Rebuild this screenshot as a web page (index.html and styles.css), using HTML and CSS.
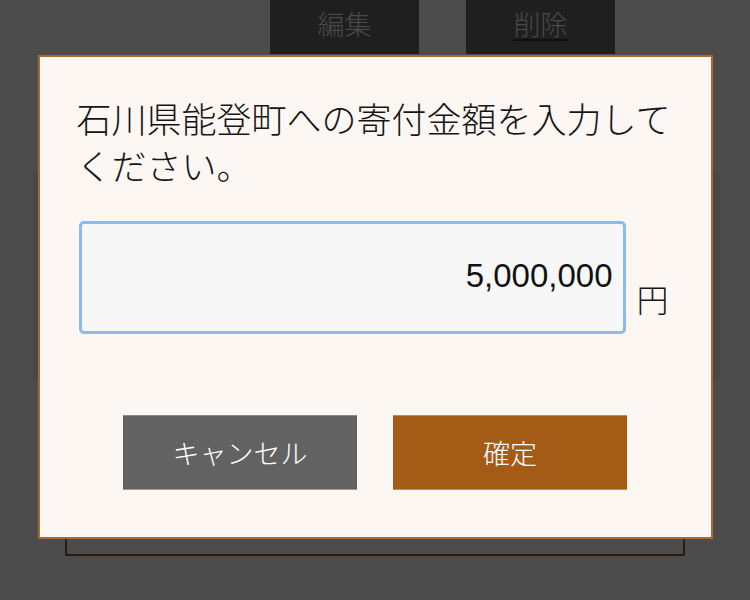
FILE: index.html
```html
<!DOCTYPE html>
<html lang="ja">
<head>
    <meta charset="UTF-8">
    <meta name="viewport" content="width=device-width, initial-scale=1.0">
    <title>寄付金額</title>
    <link rel="stylesheet" href="styles.css">
</head>
<body>
    <div class="page">
        <div class="actions">
            <button class="action-btn">編集</button>
            <button class="action-btn delete">削除</button>
        </div>
        <div class="card"></div>
        <div class="list-box"></div>
    </div>

    <div class="overlay">
        <div class="modal">
            <p class="modal-title">石川県能登町への寄付金額を入力してください。</p>
            <div class="amount-row">
                <input class="amount-input" type="text" value="5,000,000">
                <span class="unit">円</span>
            </div>
            <div class="modal-buttons">
                <button class="btn cancel">キャンセル</button>
                <button class="btn confirm">確定</button>
            </div>
        </div>
    </div>
</body>
</html>
```

FILE: styles.css
```css
/* General Styles */
body {
    margin: 0;
    padding: 0;
    background-color: #4c4c4c;
    font-family: "Noto Sans CJK JP", "Noto Sans", sans-serif;
    height: 100vh;
    overflow: hidden;
}

.page {
    display: flex;
    flex-direction: column;
}

/* Background actions */
.actions {
    display: flex;
    gap: 47px;
    padding-left: 270px;
}

.action-btn {
    width: 149px;
    height: 54px;
    background-color: #1f1f1f;
    border: none;
    color: #4a4a4a;
    font-family: "Noto Sans CJK JP", sans-serif;
    font-size: 27px;
    font-weight: 300;
    line-height: 1;
    padding: 0 0 8px;
}

.action-btn.delete {
    text-decoration: underline;
    text-decoration-color: #0e0e0e;
    text-underline-offset: 4px;
}

.card {
    margin: 118px 30px 0 33px;
    height: 208px;
    background-color: #474747;
}

.list-box {
    margin: -30px 65px 0 65px;
    height: 204px;
    border: 2px solid #2b1c0c;
    border-top: none;
}

/* Modal */
.overlay {
    position: fixed;
    inset: 0;
    display: flex;
    justify-content: center;
    align-items: flex-start;
    padding-top: 55px;
}

.modal {
    width: 597px;
    background-color: #fcf7f3;
    border: 2px solid #a96b2d;
    padding: 37px 37px 47px;
}

.modal-title {
    margin: 0;
    font-size: 35px;
    font-weight: 300;
    line-height: 47px;
    color: #151515;
}

.amount-row {
    display: flex;
    align-items: flex-end;
    margin: 33px 0 0 2px;
}

.amount-input {
    box-sizing: border-box;
    width: 547px;
    height: 113px;
    border: 3px solid #8cb9ef;
    border-radius: 5px;
    background-color: #f7f7f7;
    padding: 0 10px 4px;
    text-align: right;
    font-family: "Liberation Sans", Arial, sans-serif;
    font-size: 33px;
    color: #111;
    outline: none;
}

.unit {
    margin: 0 0 20px 11px;
    font-size: 32px;
    font-weight: 300;
    line-height: 1;
    color: #151515;
}

.modal-buttons {
    display: flex;
    justify-content: center;
    gap: 36px;
    margin-top: 81px;
}

.btn {
    width: 234px;
    height: 75px;
    border: none;
    color: #ffffff;
    font-family: "Noto Sans CJK JP", sans-serif;
    font-size: 27px;
    font-weight: 300;
    line-height: 1;
    padding: 0;
}

.btn.cancel {
    background-color: #626262;
    border-top: 1px solid #8a8a8a;
    border-bottom: 1px solid #9a9a9a;
}

.btn.confirm {
    background-color: #a45b16;
    border-top: 1px solid #c98a4c;
    border-bottom: 1px solid #c98a4c;
}
```
